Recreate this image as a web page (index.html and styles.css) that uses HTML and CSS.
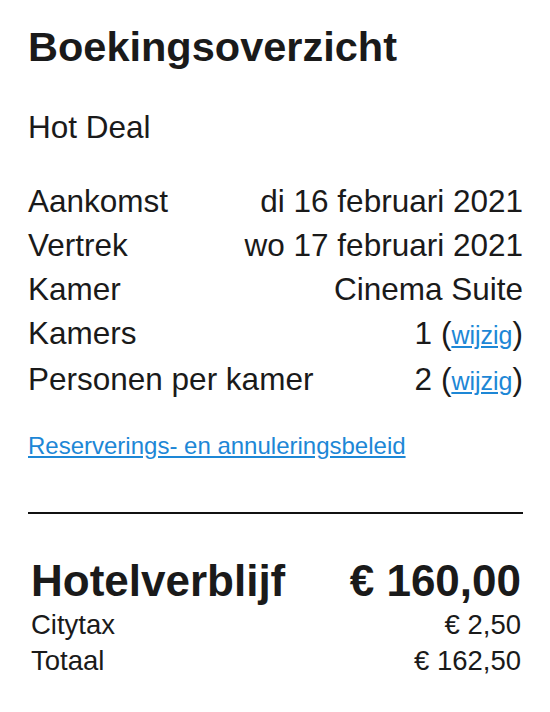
FILE: index.html
```html
<!DOCTYPE html>
<html lang="nl">
<head>
<meta charset="utf-8">
<title>Boekingsoverzicht</title>
<link rel="stylesheet" href="styles.css">
</head>
<body>
<main class="summary">
  <h1 class="title">Boekingsoverzicht</h1>
  <p class="deal">Hot Deal</p>
  <dl class="details">
    <div class="row"><dt>Aankomst</dt><dd>di 16 februari 2021</dd></div>
    <div class="row"><dt>Vertrek</dt><dd>wo 17 februari 2021</dd></div>
    <div class="row"><dt>Kamer</dt><dd>Cinema Suite</dd></div>
    <div class="row"><dt>Kamers</dt><dd>1 (<a href="#">wijzig</a>)</dd></div>
    <div class="row"><dt>Personen per kamer</dt><dd>2 (<a href="#">wijzig</a>)</dd></div>
  </dl>
  <a class="policy" href="#">Reserverings- en annuleringsbeleid</a>
  <hr class="divider">
  <div class="totals">
    <div class="total-row main"><span>Hotelverblijf</span><span>€ 160,00</span></div>
    <div class="total-row"><span>Citytax</span><span>€ 2,50</span></div>
    <div class="total-row"><span>Totaal</span><span>€ 162,50</span></div>
  </div>
</main>
</body>
</html>
```
FILE: styles.css
```css
html, body {
  margin: 0;
  padding: 0;
  background: #fff;
}
body {
  font-family: "Liberation Sans", Arial, sans-serif;
  color: #1a1a1a;
}
.summary {
  padding: 22px 27px 0 28px;
  display: flex;
  flex-direction: column;
}
.title {
  margin: 0;
  font-size: 41.5px;
  font-weight: 700;
  line-height: 50px;
}
.deal {
  margin: 33px 0 0;
  font-size: 31.5px;
  line-height: 44px;
}
.details {
  margin: 30px 0 0;
  font-size: 31.5px;
  line-height: 44px;
}
.row {
  display: flex;
  justify-content: space-between;
}
.row dt, .row dd {
  margin: 0;
}
a {
  color: #1d87d6;
}
.row a {
  font-size: 25px;
}
.policy {
  margin-top: 28px;
  font-size: 24px;
  line-height: 30px;
  align-self: flex-start;
}
.divider {
  margin: 51px 0 0;
  border: 0;
  height: 2px;
  background: #111;
}
.totals {
  padding: 41px 2px 0 3px;
}
.total-row {
  display: flex;
  justify-content: space-between;
  font-size: 27.5px;
  line-height: 36px;
}
.total-row.main {
  font-size: 44px;
  font-weight: 700;
  line-height: 52px;
}
```
